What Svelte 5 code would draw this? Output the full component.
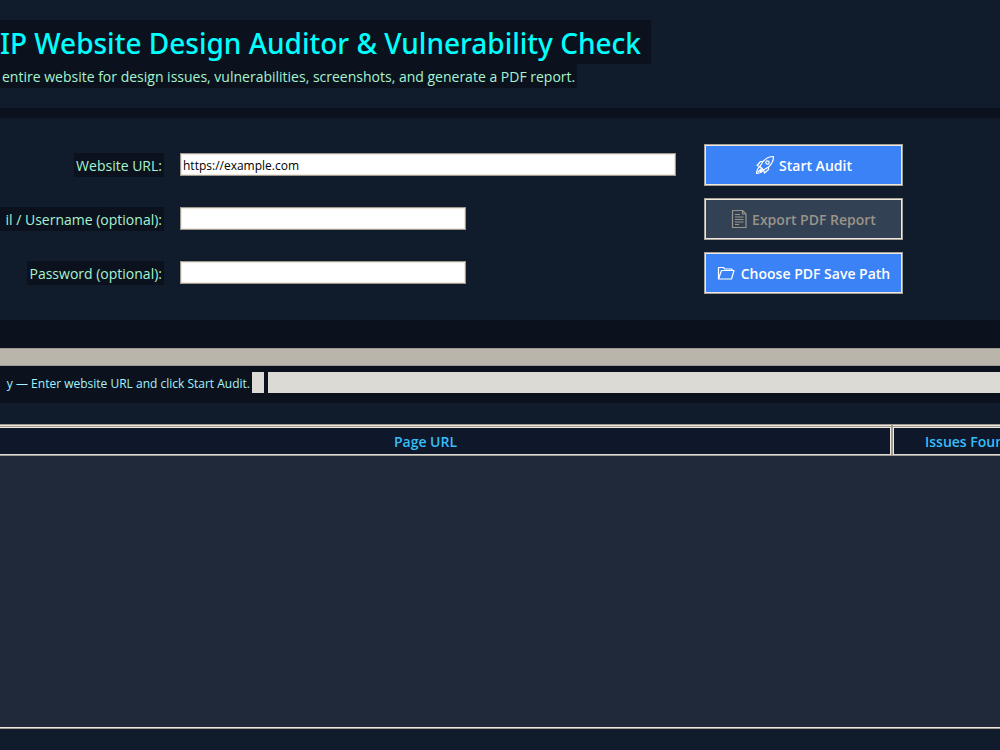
<script lang="ts">
  let url = $state('https://example.com');
  let username = $state('');
  let password = $state('');
  let reportReady = $state(false);

  const columns = ['Page URL', 'Issues Found'];
</script>

<div class="app">
  <header class="panel header">
    <h1>IP Website Design Auditor &amp; Vulnerability Check</h1>
    <p>entire website for design issues, vulnerabilities, screenshots, and generate a PDF report.</p>
  </header>

  <form class="panel form" onsubmit={(e) => e.preventDefault()}>
    <div class="fields">
      <label for="url"><span>Website URL:</span></label>
      <input id="url" type="text" bind:value={url} />
      <label for="username"><span class="wide">il / Username (optional):</span></label>
      <input id="username" class="short" type="text" bind:value={username} />
      <label for="password"><span>Password (optional):</span></label>
      <input id="password" class="short" type="password" bind:value={password} />
    </div>

    <div class="actions">
      <button type="submit">
        <svg width="20" height="20" viewBox="0 0 20 20">
          <path d="M18.500 1.500c-4 0-7.500 1.500-10.500 5L5 11.500 8.500 15 13.500 12c3.500-3 5-6.500 5-10.500z" />
          <path d="M8 6.500H5.500L2 10.500l3 1M13.500 12v2.500l-4 3.500-1-3" />
          <circle cx="12.500" cy="7.500" r="1.700" />
          <path d="M5 11.500c-2 1-3 3-3.500 7 3.500-.5 6-1.500 7-3.500M3 17l4-4M5 17.200l2-2.500" />
        </svg>
        <span>Start Audit</span>
      </button>
      <button type="button" disabled={!reportReady}>
        <svg width="17" height="20" viewBox="0 0 17 20">
          <path d="M1.500 1.500h10l3.500 3.500v13.500h-13.500z" />
          <path d="M11.500 1.500v3.500h3.500M4 5.500h5M4 8h8.500M4 10.500h8.500M4 13h8.500M4 15.500h4" />
        </svg>
        <span>Export PDF Report</span>
      </button>
      <button type="button">
        <svg width="20" height="20" viewBox="0 0 20 20">
          <path d="M1.500 16V4.500h5l1.500 1.500h7v1.500" />
          <path d="M1.500 16l3-8.500h12.500l-2.500 8.500z" />
        </svg>
        <span>Choose PDF Save Path</span>
      </button>
    </div>
  </form>

  <div class="progress" role="progressbar" aria-label="Audit progress" aria-valuenow="0"></div>

  <div class="status">
    <span class="message">y — Enter website URL and click Start Audit.</span>
    <span class="grip"></span>
    <span class="trough"></span>
  </div>

  <main class="panel results">
    <table>
      <thead>
        <tr>
          {#each columns as column}
            <th scope="col">{column}</th>
          {/each}
        </tr>
      </thead>
      <tbody>
        <tr><td colspan={columns.length}></td></tr>
      </tbody>
    </table>
  </main>
</div>

<style>
  :global(body) {
    margin: 0;
    background: #0b121e;
  }

  .app {
    display: flex;
    flex-direction: column;
    min-height: 100vh;
    overflow: hidden;
    background: #0b121e;
    color: #a7f3d0;
    font-family: 'Segoe UI', 'Open Sans', 'Noto Sans', sans-serif;
  }

  .app * {
    box-sizing: border-box;
  }

  .panel {
    background: #101b2c;
  }

  .header {
    display: flex;
    flex-direction: column;
    align-items: flex-start;
    padding: 20px 0;
    margin-bottom: 10px;
    white-space: nowrap;
  }

  h1 {
    margin: 0;
    padding: 2px 10px 0 0;
    background: #0b121e;
    color: #00ffff;
    font-family: 'Segoe UI', 'Noto Sans', sans-serif;
    font-size: 28px;
    font-weight: 500;
    line-height: 42px;
  }

  p {
    margin: 0;
    padding: 2px 2px 0;
    background: #0b121e;
    font-size: 14px;
    line-height: 22px;
  }

  .form {
    display: flex;
    gap: 28px;
    padding: 26px 97px 26px 0;
    margin-bottom: 28px;
  }

  .fields {
    flex: 1;
    display: grid;
    grid-template-columns: 164px 1fr;
    grid-auto-rows: 42px;
    gap: 12px 16px;
    align-items: center;
  }

  label {
    display: flex;
    justify-content: flex-end;
    white-space: nowrap;
    font-size: 14px;
    line-height: 22px;
  }

  label span {
    padding: 2px 2px 0;
    background: #0b121e;
  }

  .wide {
    flex: 1;
    text-align: right;
  }

  input {
    width: 100%;
    height: 23px;
    margin: 0 0 2px;
    padding: 2px 2px 0;
    border: 1px solid #9e9a91;
    border-radius: 0;
    outline: none;
    background: #ffffff;
    box-shadow: inset 0 0 0 1px #eee8de;
    color: #000000;
    font-family: inherit;
    font-size: 12px;
  }

  .short {
    width: 286px;
  }

  .actions {
    display: flex;
    flex-direction: column;
    gap: 12px;
    width: 199px;
  }

  button {
    display: flex;
    align-items: center;
    justify-content: center;
    gap: 4px;
    height: 42px;
    padding: 0;
    border: 1px solid #a8a398;
    border-radius: 0;
    background: #3b82f6;
    box-shadow: inset 0 0 0 1px #eee8de;
    color: #ffffff;
    font-family: inherit;
    font-size: 14px;
    font-weight: 600;
    white-space: nowrap;
  }

  button:disabled {
    background: #334155;
    color: #999489;
  }

  svg {
    flex: none;
    fill: none;
    stroke: currentColor;
    stroke-width: 1.2;
    stroke-linejoin: round;
  }

  .progress {
    height: 18px;
    margin-bottom: 6px;
    border: solid #9e9a91;
    border-width: 1px 0;
    background: #bab5ab;
  }

  .status {
    display: flex;
    gap: 4px;
    height: 21px;
    margin-bottom: 10px;
    color: #a5f3fc;
    font-size: 12px;
    line-height: 24px;
    white-space: nowrap;
  }

  .message {
    width: 250px;
    margin-right: -2px;
    text-align: right;
  }

  .grip {
    width: 12px;
    background: #dcdad5;
  }

  .trough {
    flex: 1;
    background: #dcdad5;
  }

  .results {
    flex: 1;
    display: flex;
    padding: 21px 0;
  }

  table {
    flex: 1;
    width: 100%;
    border: solid #9e9a91;
    border-width: 1px 0;
    border-spacing: 0;
    border-collapse: separate;
    table-layout: fixed;
    background: #1f293a;
    box-shadow: inset 0 -1px #eee8de;
  }

  thead tr {
    height: 31px;
  }

  th {
    padding: 2px 0 0;
    border: solid #9e9a91;
    border-width: 0 0 1px;
    background: #0f172a;
    color: #38bdf8;
    font-size: 14px;
    font-weight: 600;
    text-align: center;
    white-space: nowrap;
  }

  th:first-child {
    padding-right: 40px;
    border-right-width: 1px;
    box-shadow:
      inset 0 1px #eee8de,
      inset 0 2px #9e9a91,
      inset -1px 3px #eee8de,
      inset 0 -1px #dcdad5;
  }

  th:last-child {
    width: 108px;
    padding-left: 32px;
    border-left-width: 1px;
    overflow: hidden;
    text-align: left;
    box-shadow:
      inset 0 1px #eee8de,
      inset 0 2px #9e9a91,
      inset 1px 3px #eee8de,
      inset 0 -1px #dcdad5;
  }

  td {
    padding: 0;
  }
</style>
